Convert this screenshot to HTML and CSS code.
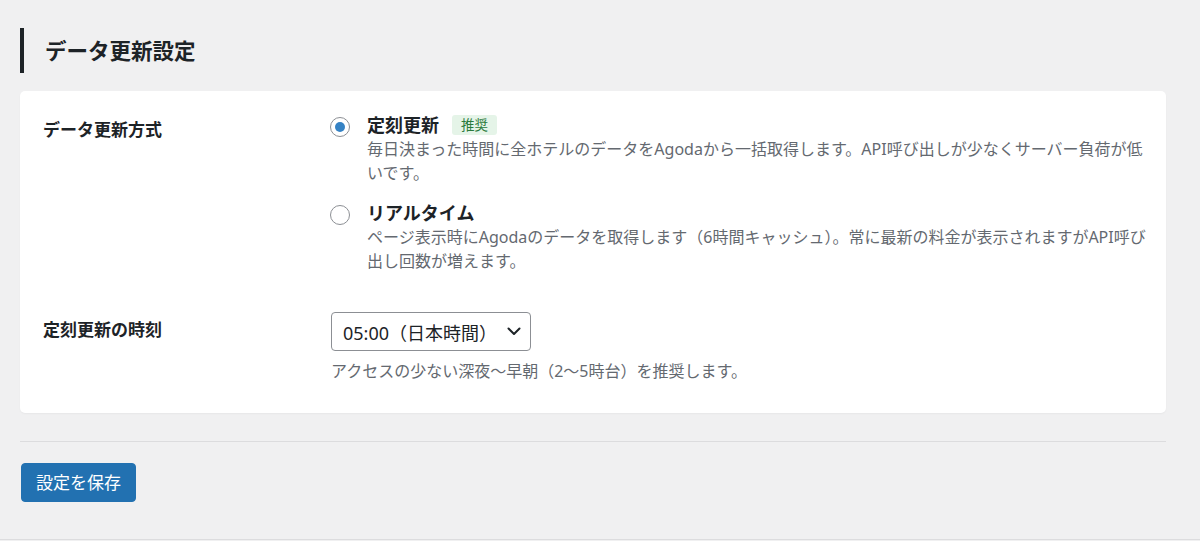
FILE: index.html
```html
<!DOCTYPE html>
<html lang="ja">
<head>
<meta charset="utf-8">
<title>データ更新設定</title>
<link rel="stylesheet" href="styles.css">
</head>
<body>
<div class="wrap">
  <h2 class="section-title">データ更新設定</h2>
  <div class="card">
    <div class="row row-mode">
      <div class="label">データ更新方式</div>
      <div class="field">
        <label class="option">
          <input type="radio" name="mode" class="radio" checked>
          <span class="option-body">
            <span class="option-title">定刻更新<span class="badge">推奨</span></span>
            <span class="desc">毎日決まった時間に全ホテルのデータをAgodaから一括取得します。API呼び出しが少なくサーバー負荷が低いです。</span>
          </span>
        </label>
        <label class="option">
          <input type="radio" name="mode" class="radio">
          <span class="option-body">
            <span class="option-title">リアルタイム</span>
            <span class="desc">ページ表示時にAgodaのデータを取得します（6時間キャッシュ）。常に最新の料金が表示されますがAPI呼び出し回数が増えます。</span>
          </span>
        </label>
      </div>
    </div>
    <div class="row row-time">
      <div class="label">定刻更新の時刻</div>
      <div class="field">
        <div class="select">
          <span class="select-value">05:00（日本時間）</span>
          <svg class="chevron" width="14" height="9" viewBox="0 0 14 9"><path d="M1.5 1.5 L7 7 L12.5 1.5" fill="none" stroke="#1d2327" stroke-width="2" stroke-linecap="round" stroke-linejoin="round"/></svg>
        </div>
        <p class="hint">アクセスの少ない深夜〜早朝（2〜5時台）を推奨します。</p>
      </div>
    </div>
  </div>
  <div class="divider"></div>
  <button class="btn-primary" type="button">設定を保存</button>
</div>
</body>
</html>
```
FILE: styles.css
```css
* { box-sizing: border-box; }
html, body {
  margin: 0;
  padding: 0;
  background: #f0f0f1;
  font-family: "Noto Sans", "Noto Sans CJK JP", sans-serif;
  color: #1d2327;
}
.wrap {
  width: 1200px;
  height: 540px;
  padding: 28px 34px 0 20px;
  border-bottom: 1px solid #dcdcde;
}
.section-title {
  margin: 0;
  border-left: 4px solid #1d2327;
  padding-left: 21px;
  height: 45px;
  line-height: 45px;
  font-size: 21.5px;
  font-weight: 700;
}
.card {
  margin-top: 18px;
  background: #fff;
  border-radius: 5px;
  box-shadow: 0 1px 2px rgba(0,0,0,0.04);
  padding: 21px 14px 29px 23px;
}
.row {
  display: grid;
  grid-template-columns: 287px 1fr;
}
.row-time { margin-top: 39px; }
.label {
  font-size: 17px;
  font-weight: 700;
  line-height: 24px;
  padding-top: 6px;
}
.field { min-width: 0; }
.option {
  display: flex;
  gap: 17px;
  align-items: flex-start;
}
.option + .option { margin-top: 15px; }
.radio {
  appearance: none;
  -webkit-appearance: none;
  margin: 5px 0 0 0;
  width: 20px;
  height: 20px;
  border: 1px solid #8c8f94;
  border-radius: 50%;
  background: #fff;
  flex: none;
  display: grid;
  place-items: center;
}
.radio:checked::before {
  content: "";
  width: 10px;
  height: 10px;
  border-radius: 50%;
  background: #3582c4;
}
.option-body { display: flex; flex-direction: column; min-width: 0; }
.option-title {
  font-size: 18px;
  font-weight: 700;
  line-height: 26px;
  display: flex;
  align-items: center;
}
.badge {
  margin-left: 13px;
  background: #e5f4e8;
  color: #2a7a3b;
  font-size: 13.5px;
  font-weight: 400;
  line-height: 20px;
  padding: 0 9px;
  border-radius: 3px;
}
.desc, .hint {
  font-size: 16px;
  line-height: 23.5px;
  color: #646970;
}
.select {
  width: 200px;
  height: 39px;
  border: 1px solid #8c8f94;
  border-radius: 4px;
  background: #fff;
  display: flex;
  align-items: center;
  justify-content: space-between;
  padding: 0 9px 0 11px;
  font-size: 18px;
  margin-left: 1px;
}
.chevron { flex: none; }
.hint {
  margin: 9px 0 0 1px;
}
.divider {
  margin-top: 28px;
  height: 1px;
  background: #dcdcde;
}
.btn-primary {
  margin: 21px 0 0 1px;
  height: 39px;
  padding: 0 14px;
  background: #2271b1;
  border: 1px solid #2271b1;
  border-radius: 4px;
  color: #fff;
  font-family: inherit;
  font-size: 17px;
  line-height: 37px;
}
```
